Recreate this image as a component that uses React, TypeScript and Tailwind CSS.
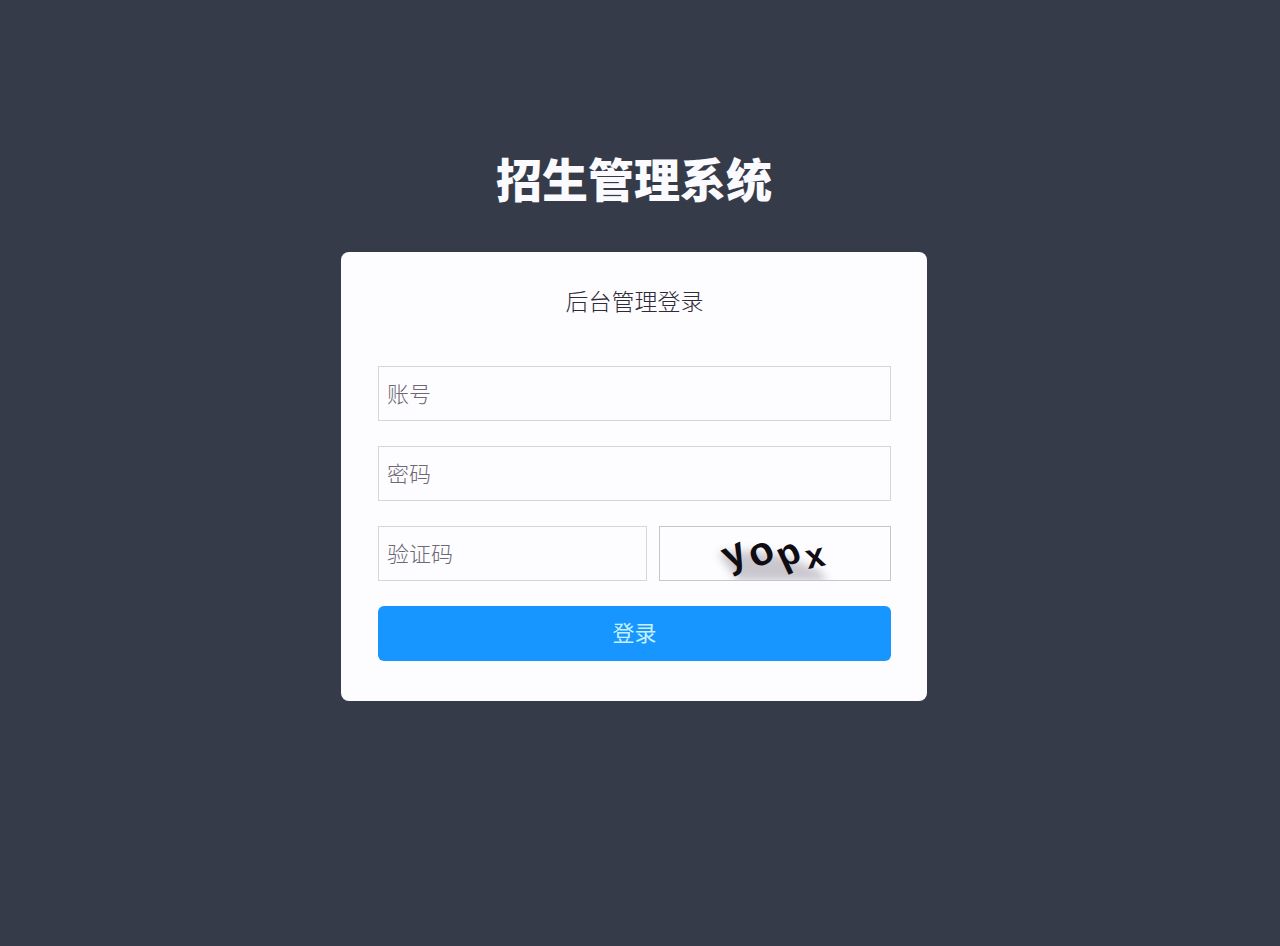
import { useState } from "react"
import type { ComponentProps, FormEvent } from "react"
import clsx from "clsx"

const captchaLetters = [
  { char: "y", x: 69, y: 43, angle: -25, size: 40 },
  { char: "o", x: 95, y: 42, angle: -25, size: 40 },
  { char: "p", x: 123, y: 42, angle: -25, size: 37 },
  { char: "x", x: 148, y: 42, angle: -12, size: 34 },
]

function Field({ label, className, ...props }: ComponentProps<"input"> & { label: string }) {
  return (
    <input
      aria-label={label}
      placeholder={label}
      className={clsx(
        "h-[55px] min-w-0 border border-[#d3d6de] bg-[#fdfdff] px-2 pb-1 text-[22px] font-light text-[#4a4656] outline-none placeholder:text-[#6d6776] focus:border-[#1896ff]",
        className,
      )}
      {...props}
    />
  )
}

function CaptchaImage() {
  return (
    <svg
      viewBox="0 0 230 53"
      className="h-full w-full overflow-visible"
      fontFamily="'Liberation Sans', sans-serif"
      fontWeight="bold"
    >
      <defs>
        <filter id="captcha-shade" x="-20%" y="-50%" width="140%" height="200%">
          <feGaussianBlur stdDeviation="4" />
        </filter>
        <clipPath id="captcha-frame">
          <rect width="230" height="53" />
        </clipPath>
      </defs>
      <g clipPath="url(#captcha-frame)">
        <path
          d="M58 26 L92 24 L128 30 L160 44 L168 54 L78 54 Z"
          fill="#8b8492"
          opacity="0.45"
          filter="url(#captcha-shade)"
        />
      </g>
      {captchaLetters.map(({ char, x, y, angle, size }) => (
        <text
          key={char}
          x={x}
          y={y}
          fontSize={size}
          fill="#100c14"
          transform={`rotate(${angle} ${x} ${y})`}
        >
          {char}
        </text>
      ))}
    </svg>
  )
}

export default function App() {
  const [account, setAccount] = useState("")
  const [password, setPassword] = useState("")
  const [code, setCode] = useState("")

  function handleSubmit(event: FormEvent) {
    event.preventDefault()
  }

  return (
    <main className="flex min-h-screen flex-col items-center bg-[#363b49] pt-[147px] pr-3 font-['Noto_Sans_CJK_SC',sans-serif]">
      <h1 className="text-[46px] leading-[60px] font-black text-[#fbfbff]">招生管理系统</h1>

      <form
        onSubmit={handleSubmit}
        className="mt-[45px] flex w-full max-w-[586px] flex-col rounded-lg bg-[#fdfdff] pt-8 pr-9 pb-10 pl-[37px]"
      >
        <h2 className="text-center text-[23px] leading-8 font-light text-[#2f2938]">后台管理登录</h2>

        <div className="mt-[50px] flex flex-col gap-[25px]">
          <Field
            label="账号"
            autoComplete="username"
            value={account}
            onChange={(event) => setAccount(event.target.value)}
          />
          <Field
            label="密码"
            type="password"
            autoComplete="current-password"
            value={password}
            onChange={(event) => setPassword(event.target.value)}
          />
          <div className="flex gap-3">
            <Field
              label="验证码"
              className="flex-1"
              autoComplete="off"
              value={code}
              onChange={(event) => setCode(event.target.value)}
            />
            <button
              type="button"
              aria-label="刷新验证码"
              className="h-[55px] w-[232px] border border-[#c3c6cd]"
            >
              <CaptchaImage />
            </button>
          </div>
          <button
            type="submit"
            className="h-[55px] rounded-md bg-[#1896ff] pb-1 text-[22px] text-[#c4f1ff]"
          >
            登录
          </button>
        </div>
      </form>
    </main>
  )
}
